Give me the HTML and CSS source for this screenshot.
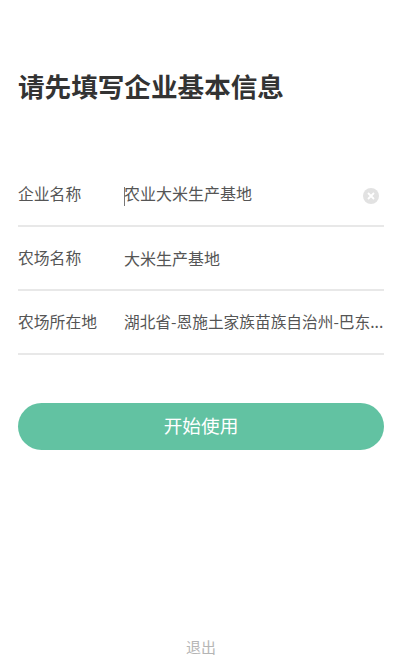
FILE: index.html
```html
<!DOCTYPE html>
<html lang="zh-CN">
	<head>
		<meta charset="UTF-8" />
		<meta name="viewport" content="width=device-width, initial-scale=1.0" />
		<title>企业基本信息</title>

		<link rel="stylesheet" href="styles.css">
	</head>
	<body>
		<div class="container">
			<h1 class="title">请先填写企业基本信息</h1>
			<div class="form">
				<div class="row">
					<span class="label">企业名称</span>
					<span class="value"><i class="caret"></i>农业大米生产基地</span>
					<svg class="clear" viewBox="0 0 16 16" width="16" height="16">
						<circle cx="8" cy="8" r="8" fill="#e2e2e2" />
						<path d="M5 5l6 6M11 5l-6 6" stroke="#fff" stroke-width="1.8" />
					</svg>
				</div>
				<div class="row">
					<span class="label">农场名称</span>
					<span class="value">大米生产基地</span>
				</div>
				<div class="row">
					<span class="label">农场所在地</span>
					<span class="value long">湖北省-恩施土家族苗族自治州-巴东...</span>
				</div>
			</div>
			<button class="start">开始使用</button>
			<div class="quit">退出</div>
		</div>
	</body>
</html>
```

FILE: styles.css
```css
* {
	margin: 0;
	padding: 0;
	box-sizing: border-box;
}
body {
	width: 400px;
	height: 670px;
	overflow: hidden;
	background-color: #fff;
	font-family: "Noto Sans CJK SC", "Liberation Sans", sans-serif;
}
.container {
	height: 100%;
	display: flex;
	flex-direction: column;
	padding: 0 16px 0 18px;
}
.title {
	margin-top: 67px;
	font-size: 26.6px;
	line-height: 38px;
	font-weight: 700;
	color: #333;
}
.form {
	margin-top: 58px;
}
.row {
	display: flex;
	align-items: center;
	height: 64px;
	padding-bottom: 1px;
	border-bottom: 2px solid #e8e8e8;
}
.label {
	width: 106px;
	flex-shrink: 0;
	font-size: 15.8px;
	color: #555;
}
.value {
	flex: 1;
	min-width: 0;
	font-size: 16px;
	color: #555;
	white-space: nowrap;
}
.long {
	font-size: 15.7px;
}
.caret {
	display: inline-block;
	width: 1px;
	height: 19px;
	margin-right: -1px;
	vertical-align: middle;
	background-color: #777;
}
.clear {
	flex-shrink: 0;
	margin: 5px 5px 0 0;
}
.start {
	margin-top: 48px;
	height: 47px;
	padding-bottom: 4px;
	border: none;
	border-radius: 24px;
	background-color: #62c2a2;
	color: #fff;
	font-family: inherit;
	font-size: 18.7px;
}
.quit {
	margin-top: auto;
	padding-bottom: 13px;
	text-align: center;
	font-size: 15px;
	line-height: 20px;
	color: #b5b5b5;
}
```
